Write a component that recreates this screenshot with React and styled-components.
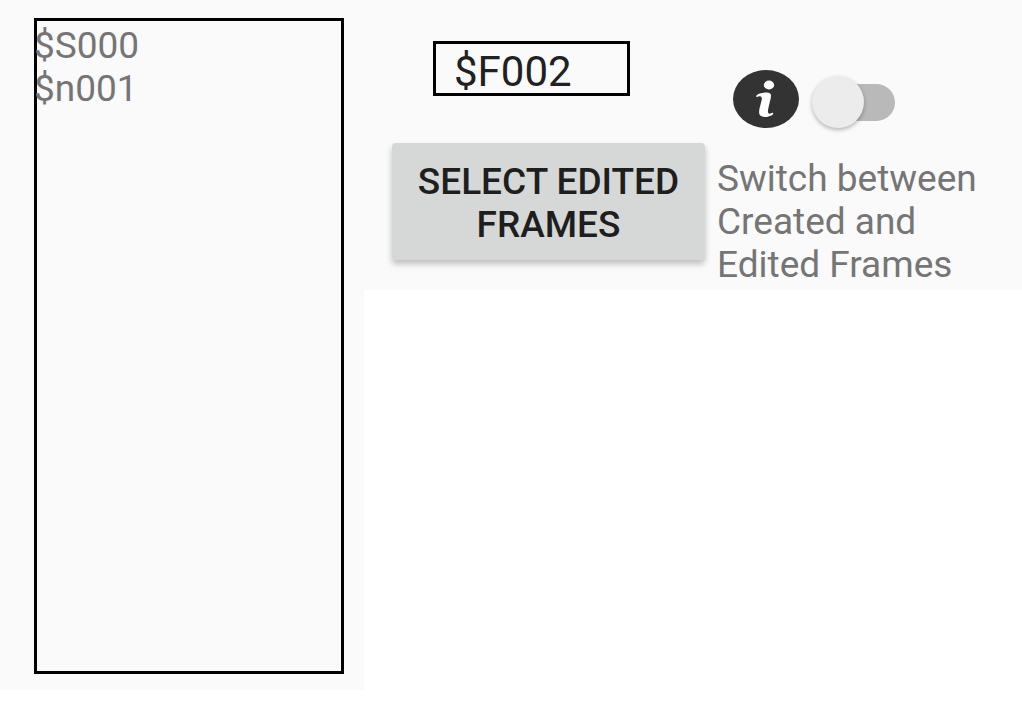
import React, { useState } from 'react';
import styled, { createGlobalStyle } from 'styled-components';

const GlobalStyle = createGlobalStyle`
  *, *::before, *::after { box-sizing: border-box; }
  body {
    margin: 0;
    background: #fff;
    color: #757575;
    font: 400 37px/43px Roboto, sans-serif;
  }
`;

const Page = styled.div`
  display: flex;
  align-items: flex-start;
`;

const Sidebar = styled.aside`
  display: flex;
  flex: 0 0 364px;
  min-height: calc(100vh - 32px);
  padding: 18px 20px 16px 34px;
  background: #fafafa;
`;

const FrameList = styled.ul`
  flex: 1;
  margin: 0;
  padding: 6px 0 0;
  list-style: none;
  box-shadow: inset 0 0 0 3px #000;
`;

const Controls = styled.main`
  flex: 1;
  min-width: 0;
  display: grid;
  grid-template-columns: minmax(0, 347fr) minmax(0, 311fr);
  background: #fafafa;
`;

const EditorColumn = styled.section`
  display: flex;
  flex-direction: column;
  align-items: flex-start;
  gap: 47px;
  padding: 41px 6px 0 28px;
`;

const FrameInput = styled.input`
  width: 197px;
  height: 55px;
  margin: 0 0 0 41px;
  padding: 6px 15px 0 18px;
  border: 3px solid #000;
  border-radius: 0;
  outline: none;
  background: transparent;
  color: #212121;
  font: 400 42px/43px Roboto, sans-serif;
`;

const SelectButton = styled.button`
  align-self: stretch;
  padding: 17px 20px 14px;
  border: 0;
  border-radius: 4px;
  background: #d6d7d7;
  box-shadow: 0 4px 6px rgba(0, 0, 0, 0.24);
  color: #1e1e1e;
  font: 500 37px/43px Roboto, sans-serif;
  text-transform: uppercase;
`;

const SwitchColumn = styled.section`
  padding: 70px 16px 4px 6px;
`;

const SwitchRow = styled.div`
  display: flex;
  align-items: flex-end;
  gap: 13px;
  margin: 0 0 29px 16px;
`;

const InfoButton = styled.button`
  display: flex;
  padding: 0;
  border: 0;
  background: none;
`;

const Toggle = styled.input`
  appearance: none;
  display: flex;
  align-items: center;
  position: relative;
  width: 83px;
  height: 52px;
  margin: 0;

  &::before {
    content: '';
    flex: 1;
    height: 37px;
    margin-left: 8px;
    border-radius: 19px;
    background: #b9b9b9;
  }

  &::after {
    content: '';
    position: absolute;
    top: 0;
    left: ${({ checked }) => (checked ? '31px' : '0')};
    width: 52px;
    height: 52px;
    border-radius: 50%;
    background: #ececec;
    box-shadow: 0 2px 4px rgba(0, 0, 0, 0.28);
  }
`;

const Description = styled.label`
  display: block;
`;

function InfoIcon() {
  return (
    <svg width="66" height="58" viewBox="0 0 66 58" aria-hidden="true">
      <ellipse cx="33" cy="29" rx="33" ry="29" fill="#333" />
      <ellipse cx="36" cy="15" rx="5.2" ry="4.4" fill="#fff" />
      <path
        d="M23 26.6C23.6 24 27 23 30 22.9C32 22.3 36 22.2 37.6 24C38.4 25.6 37.8 28.5 37 31L35.3 38.5C34.6 41.8 34.8 43.6 36.6 43.8C38 43.8 38.8 42.4 40.2 43C40.6 45.2 37.4 46.2 35.5 46.4C33.5 47.3 29.5 47.4 27.6 45.8C25.8 44.4 25.9 42 26.5 38.5L28.6 30.5C29.2 27.6 28.6 26.2 26.8 26.2C25.2 26.2 24.6 27.4 23 26.6Z"
        fill="#fff"
      />
    </svg>
  );
}

export default function App() {
  const [frame, setFrame] = useState('$F002');
  const [edited, setEdited] = useState(false);

  return (
    <>
      <GlobalStyle />
      <Page>
        <Sidebar>
          <FrameList>
            <li>$S000</li>
            <li>$n001</li>
          </FrameList>
        </Sidebar>
        <Controls>
          <EditorColumn>
            <FrameInput
              type="text"
              aria-label="Frame"
              value={frame}
              onChange={(event) => setFrame(event.target.value)}
            />
            <SelectButton type="button">Select edited frames</SelectButton>
          </EditorColumn>
          <SwitchColumn>
            <SwitchRow>
              <InfoButton type="button" aria-label="Information">
                <InfoIcon />
              </InfoButton>
              <Toggle
                id="frame-mode"
                type="checkbox"
                role="switch"
                checked={edited}
                onChange={(event) => setEdited(event.target.checked)}
              />
            </SwitchRow>
            <Description htmlFor="frame-mode">
              Switch between Created and Edited Frames
            </Description>
          </SwitchColumn>
        </Controls>
      </Page>
    </>
  );
}
